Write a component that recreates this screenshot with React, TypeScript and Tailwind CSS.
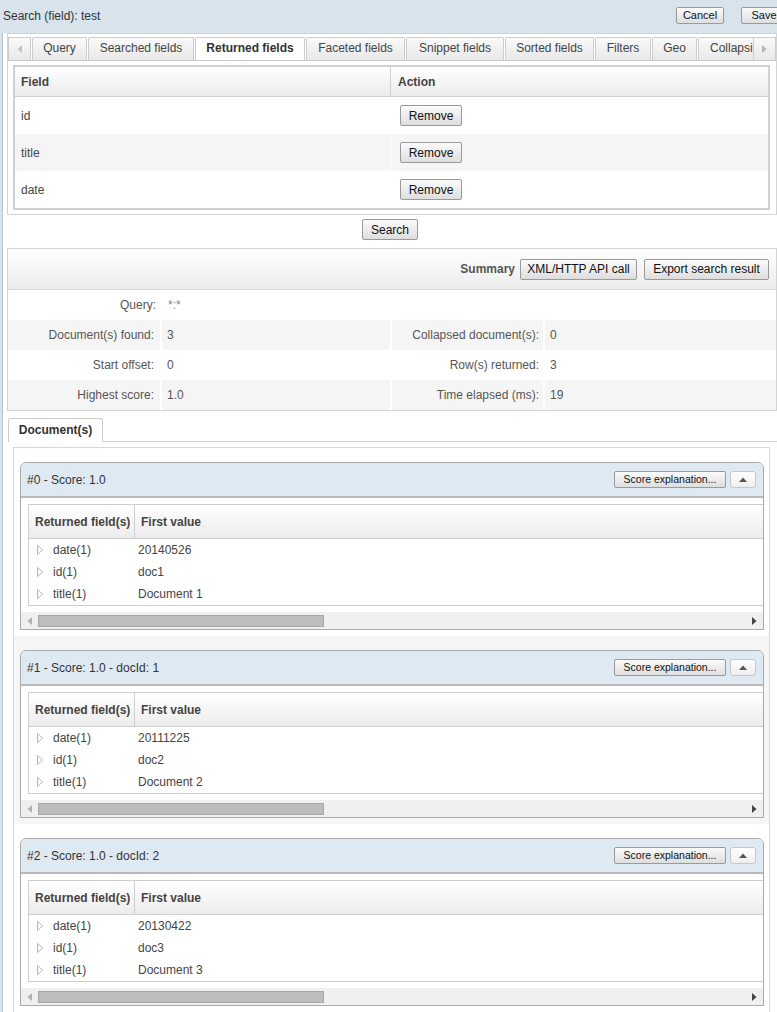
import React from "react";

const tabs = [
  { name: "Query", cls: "w-[55px]" },
  { name: "Searched fields", cls: "w-[106px]" },
  { name: "Returned fields", cls: "w-[110px]", active: true },
  { name: "Faceted fields", cls: "w-[99px]" },
  { name: "Snippet fields", cls: "w-[98px]" },
  { name: "Sorted fields", cls: "w-[89px]" },
  { name: "Filters", cls: "w-[56px]" },
  { name: "Geo", cls: "w-[45px]" },
  { name: "Collapsing", cls: "w-[70px]" },
];

const returnedFields = ["id", "title", "date"];

const summaryRows = [
  { l1: "Document(s) found:", v1: "3", l2: "Collapsed document(s):", v2: "0" },
  { l1: "Start offset:", v1: "0", l2: "Row(s) returned:", v2: "3" },
  { l1: "Highest score:", v1: "1.0", l2: "Time elapsed (ms):", v2: "19" },
];

const docs = [
  { title: "#0 - Score: 1.0", date: "20140526", id: "doc1", name: "Document 1" },
  { title: "#1 - Score: 1.0 - docId: 1", date: "20111225", id: "doc2", name: "Document 2" },
  { title: "#2 - Score: 1.0 - docId: 2", date: "20130422", id: "doc3", name: "Document 3" },
];

const btn =
  "border border-[#9a9a9a] rounded-[2px] bg-gradient-to-b from-[#fbfbfb] to-[#dedede] text-[#111] leading-none";

function Tri({ dir, color }: { dir: "left" | "right" | "up"; color: string }) {
  if (dir === "up")
    return (
      <svg width="8" height="5" viewBox="0 0 8 5">
        <polygon points="0,5 4,0.5 8,5" fill={color} />
      </svg>
    );
  return (
    <svg width="5" height="8" viewBox="0 0 5 8">
      <polygon points={dir === "left" ? "5,0 0.5,4 5,8" : "0,0 4.5,4 0,8"} fill={color} />
    </svg>
  );
}

function Expander() {
  return (
    <svg width="6" height="10" viewBox="0 0 6 10" className="shrink-0">
      <polygon points="0.5,0.5 5.5,5 0.5,9.5" fill="none" stroke="#b5b5b5" strokeWidth="1" />
    </svg>
  );
}

function DocPanel({ doc, shaded }: { doc: (typeof docs)[number]; shaded: boolean }) {
  const rows = [
    { f: "date(1)", v: doc.date },
    { f: "id(1)", v: doc.id },
    { f: "title(1)", v: doc.name },
  ];
  return (
    <div className={`pt-[14px] pb-[6px] pl-[6px] pr-[5px] ${shaded ? "bg-[#f6f6f6]" : "bg-white"}`}>
      <div className="border border-[#a9a9a9] rounded-t-[6px] bg-white overflow-hidden">
        <div className="h-[35px] bg-[#dfe9f2] border-b-2 border-[#b9b9b9] flex items-center pl-[6px] pr-[7px]">
          <span className="text-[12px] text-[#333]">{doc.title}</span>
          <div className="ml-auto flex items-center gap-[4px]">
            <button className={`${btn} h-[17px] w-[112px] text-[10.5px]`}>Score explanation...</button>
            <button className="h-[17px] w-[26px] border border-[#c8c8c8] rounded-[3px] bg-gradient-to-b from-white to-[#eeeeee] flex items-center justify-center">
              <Tri dir="up" color="#555" />
            </button>
          </div>
        </div>
        <div className="pt-[6px] pl-[7px]">
          <div className="border border-r-0 border-[#cfcfcf]">
            <div className="h-[34px] flex items-center bg-gradient-to-b from-white to-[#ececec] border-b border-[#cfcfcf] font-bold text-[#444]">
              <div className="w-[106px] h-full flex items-center pl-[6px] border-r border-[#cfcfcf]">Returned field(s)</div>
              <div className="pl-[6px]">First value</div>
            </div>
            {rows.map((r) => (
              <div key={r.f} className="h-[22px] flex items-center text-[#444]">
                <div className="w-[106px] flex items-center pl-[8px] gap-[10px]">
                  <Expander />
                  <span>{r.f}</span>
                </div>
                <div className="pl-[3px]">{r.v}</div>
              </div>
            ))}
          </div>
        </div>
        <div className="mt-[6px] h-[17px] bg-[#f0f0f0] flex items-center">
          <div className="w-[17px] flex justify-center">
            <Tri dir="left" color="#b0b0b0" />
          </div>
          <div className="w-[286px] h-[12px] bg-[#bdbdbd] border border-[#a8a8a8]" />
          <div className="ml-auto w-[17px] flex justify-center">
            <Tri dir="right" color="#444" />
          </div>
        </div>
      </div>
    </div>
  );
}

export default function App() {
  return (
    <div className="w-[777px] h-[1012px] overflow-hidden bg-[#d9e3ec] font-['Liberation_Sans',Arial,sans-serif] text-[12px] text-[#333]">
      {/* title bar */}
      <div className="h-[31px] flex items-center pl-[3px]">
        <span className="flex-1 text-[#333]">Search (field): test</span>
        <div className="flex items-center gap-[17px] mr-[-10px]">
          <button className={`${btn} h-[17px] w-[48px] text-[11px]`}>Cancel</button>
          <button className={`${btn} h-[17px] w-[46px] text-[11px]`}>Save</button>
        </div>
      </div>

      <div className="ml-[2px] border-l border-[#b7c6d5] bg-white h-full">
        {/* settings tabs */}
        <div className="ml-[4px] mt-[2px] border border-[#d3d3d3] pt-[3px] pb-[4px]">
          <div className="h-[24px] flex items-end border-b border-[#cccccc]">
            <div className="w-[23px] h-[23px] border border-b-0 border-[#cccccc] bg-gradient-to-b from-[#fafafa] to-[#e8e8e8] flex items-center justify-center shrink-0">
              <Tri dir="left" color="#c4c4c4" />
            </div>
            <div className="flex-1 flex items-end gap-[1px] overflow-hidden ml-[1px] min-w-0">
              {tabs.map((t) =>
                t.active ? (
                  <div
                    key={t.name}
                    className={`${t.cls} shrink-0 h-[24px] mb-[-1px] pb-[3px] border border-b-0 border-[#cccccc] rounded-t-[2px] bg-white font-bold text-[#333] flex items-center justify-center`}
                  >
                    {t.name}
                  </div>
                ) : (
                  <div
                    key={t.name}
                    className={`${t.cls} shrink-0 h-[23px] pb-[2px] border border-b-0 border-[#cccccc] rounded-t-[2px] bg-gradient-to-b from-[#fafafa] to-[#e8e8e8] text-[#444] flex items-center ${t.name === "Collapsing" ? "pl-[11px]" : "justify-center"}`}
                  >
                    {t.name}
                  </div>
                )
              )}
            </div>
            <div className="w-[23px] h-[23px] border border-b-0 border-[#cccccc] bg-gradient-to-b from-[#fafafa] to-[#e8e8e8] flex items-center justify-center shrink-0">
              <Tri dir="right" color="#b5b5b5" />
            </div>
          </div>

          <div className="pl-[5px] pr-[6px] pt-[4px]">
            <div className="border-2 border-[#d0d0d0]">
              <div className="h-[30px] flex bg-gradient-to-b from-white to-[#ebebeb] border-b border-[#d0d0d0] font-bold text-[#444]">
                <div className="w-[376px] border-r border-[#d0d0d0] flex items-center pl-[6px]">Field</div>
                <div className="flex items-center pl-[7px]">Action</div>
              </div>
              {returnedFields.map((f, i) => (
                <div key={f} className={`h-[37px] flex ${i === 1 ? "bg-[#f5f5f5]" : "bg-white"}`}>
                  <div className={`w-[376px] flex items-center pl-[6px] text-[#444] ${i === 1 ? "border-r border-white" : ""}`}>{f}</div>
                  <div className="flex items-center pl-[9px]">
                    <button className={`${btn} h-[21px] w-[62px] text-[12px]`}>Remove</button>
                  </div>
                </div>
              ))}
            </div>
          </div>
        </div>

        <div className="flex justify-center mt-[4px]">
          <button className={`${btn} h-[21px] w-[56px] text-[12px]`}>Search</button>
        </div>

        {/* summary */}
        <div className="ml-[4px] mt-[8px] border border-[#d3d3d3]">
          <div className="h-[41px] flex items-center justify-end pr-[7px] gap-[7px] bg-gradient-to-b from-white to-[#ececec] border-b border-[#d3d3d3]">
            <span className="font-bold text-[#555] mr-[-2px]">Summary</span>
            <button className={`${btn} h-[21px] w-[117px] text-[12px]`}>XML/HTTP API call</button>
            <button className={`${btn} h-[21px] w-[125px] text-[12px]`}>Export search result</button>
          </div>
          <div className="h-[30px] flex items-center text-[#555]">
            <div className="w-[154px] text-right pr-[6px]">Query:</div>
            <div className="pl-[6px] text-[#888]">*:*</div>
          </div>
          {summaryRows.map((r, i) => (
            <div key={r.l1} className={`h-[30px] flex ${i % 2 === 0 ? "bg-[#f5f5f5]" : "bg-white"} text-[#555]`}>
              <div className="w-[154px] flex items-center justify-end pr-[6px] border-r-2 border-white">{r.l1}</div>
              <div className="w-[230px] flex items-center pl-[5px] border-r-2 border-white">{r.v1}</div>
              <div className="w-[153px] flex items-center justify-end pr-[4px] border-r-2 border-white">{r.l2}</div>
              <div className="flex items-center pl-[5px]">{r.v2}</div>
            </div>
          ))}
        </div>

        {/* documents */}
        <div className="ml-[5px] mt-[7px]">
          <div className="h-[24px] flex items-end border-b border-[#d3d3d3]">
            <div className="w-[95px] h-[24px] mb-[-1px] pb-[1px] border border-b-0 border-[#cccccc] rounded-t-[3px] bg-white font-bold text-[#333] flex items-center justify-center">
              Document(s)
            </div>
          </div>
          <div className="pl-[5px] pr-[7px] pt-[5px]">
            <div className="border border-[#d8d8d8] border-b-0">
              {docs.map((d, i) => (
                <DocPanel key={d.title} doc={d} shaded={i === 1} />
              ))}
            </div>
          </div>
        </div>
      </div>
    </div>
  );
}
